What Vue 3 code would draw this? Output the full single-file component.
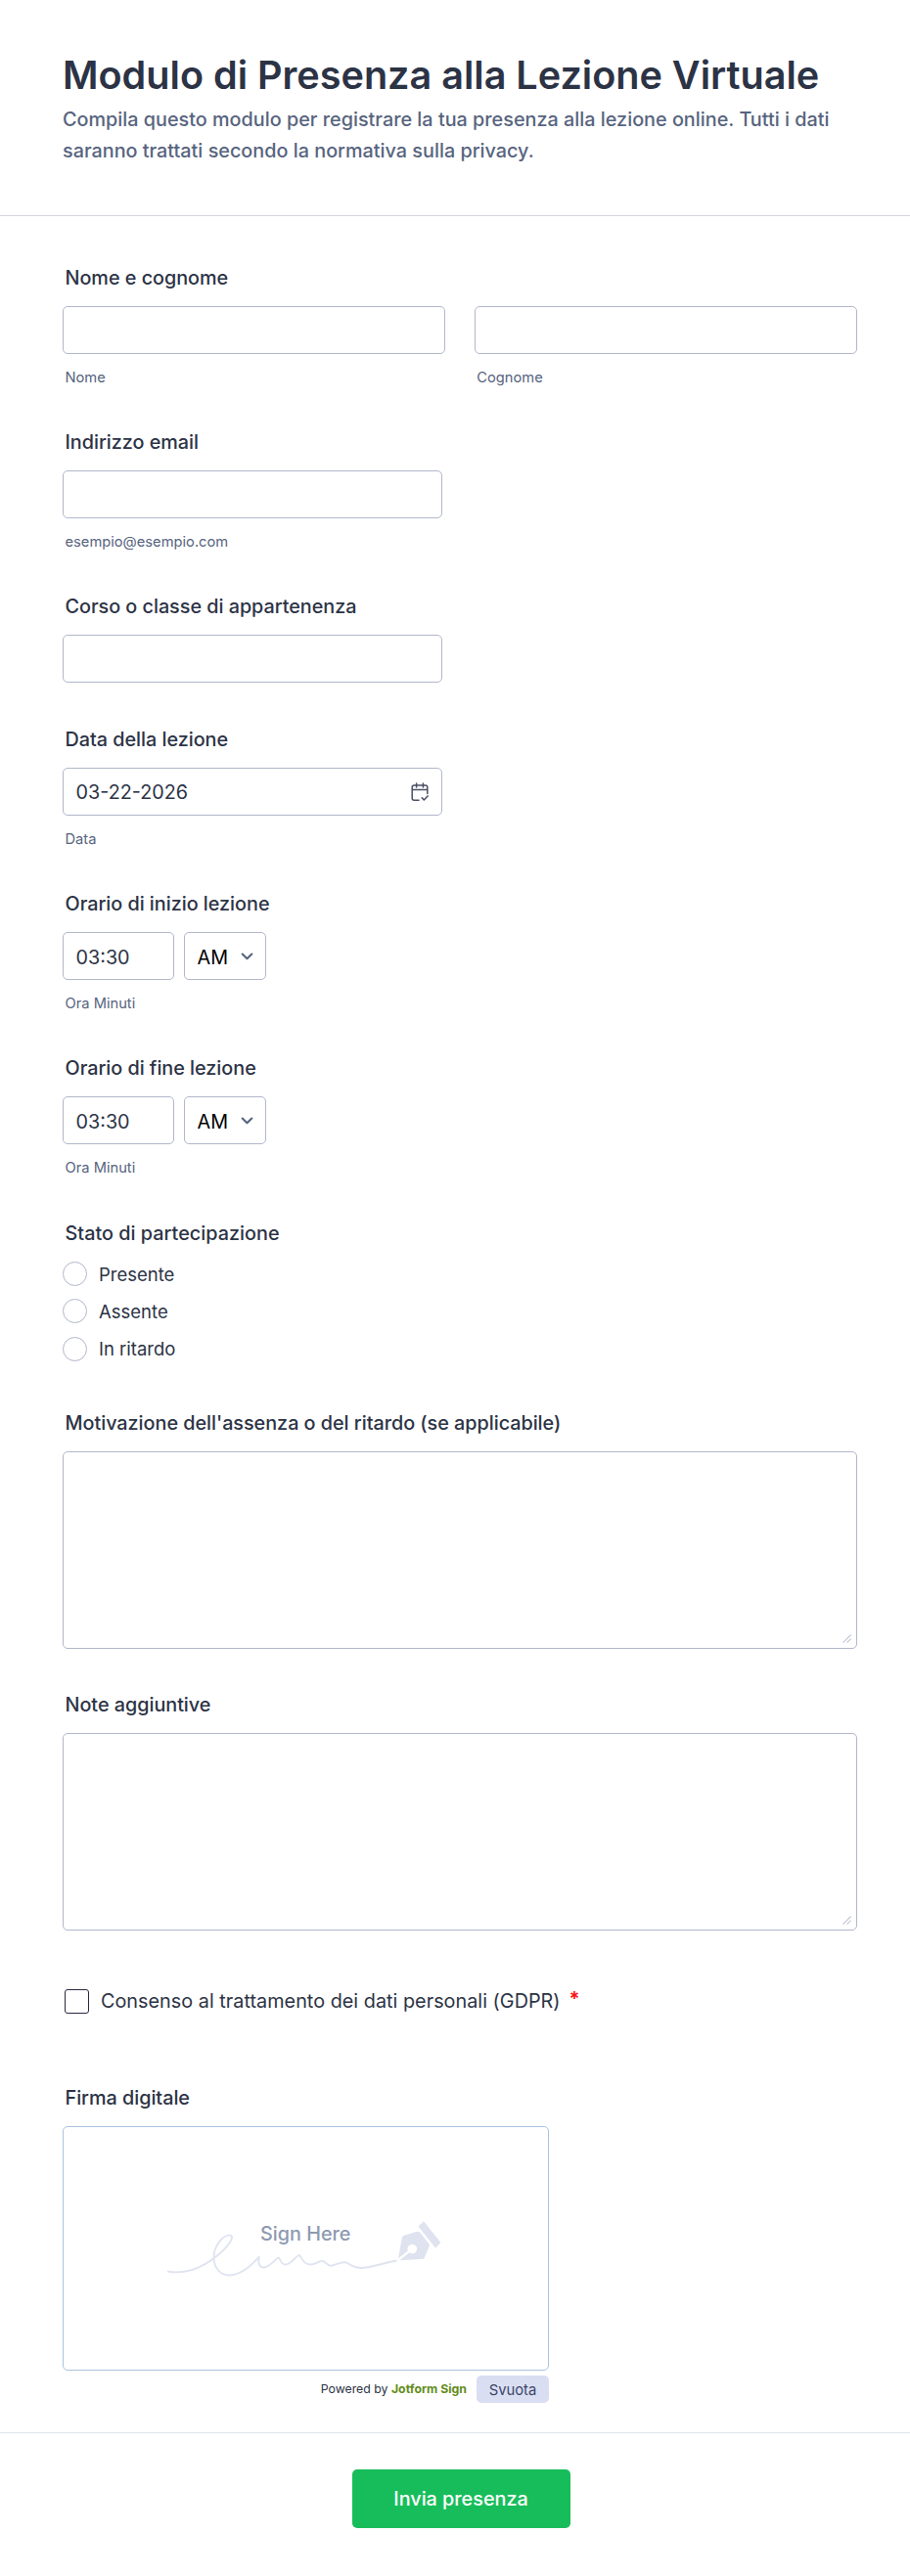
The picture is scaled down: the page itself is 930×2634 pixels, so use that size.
<script setup>
import { ref } from 'vue';

const firstName = ref('');
const lastName = ref('');
const email = ref('');
const course = ref('');
const lessonDate = ref('03-22-2026');
const status = ref('');
const consent = ref(false);

const times = ref([
  { id: 'start', label: 'Orario di inizio lezione', value: '03:30', period: 'AM' },
  { id: 'end', label: 'Orario di fine lezione', value: '03:30', period: 'AM' }
]);

const statuses = ['Presente', 'Assente', 'In ritardo'];

const notes = ref([
  { id: 'reason', label: "Motivazione dell'assenza o del ritardo (se applicabile)", value: '' },
  { id: 'notes', label: 'Note aggiuntive', value: '' }
]);
</script>

<template>
  <form class="form" @submit.prevent>
    <header class="form-header">
      <h1>Modulo di Presenza alla Lezione Virtuale</h1>
      <p>Compila questo modulo per registrare la tua presenza alla lezione online. Tutti i dati saranno trattati secondo la normativa sulla privacy.</p>
    </header>

    <div class="form-body">
      <div class="field">
        <label class="label" for="first">Nome e cognome</label>
        <div class="name-row">
          <div class="name-col">
            <input id="first" v-model="firstName" class="control" type="text">
            <span class="sub">Nome</span>
          </div>
          <div class="name-col">
            <input id="last" v-model="lastName" class="control" type="text">
            <span class="sub">Cognome</span>
          </div>
        </div>
      </div>

      <div class="field">
        <label class="label" for="email">Indirizzo email</label>
        <input id="email" v-model="email" class="control half" type="email">
        <span class="sub">esempio@esempio.com</span>
      </div>

      <div class="field no-sub">
        <label class="label" for="course">Corso o classe di appartenenza</label>
        <input id="course" v-model="course" class="control half" type="text">
      </div>

      <div class="field">
        <label class="label" for="date">Data della lezione</label>
        <div class="control half date-box">
          <input id="date" v-model="lessonDate" class="bare" type="text">
          <svg class="calendar" viewBox="0 0 18 20" fill="none" stroke="#4a4f63" stroke-width="1.5" stroke-linecap="round" stroke-linejoin="round">
            <path d="M8 18.2H3.2C2 18.2 1.2 17.4 1.2 16.2V5C1.2 3.8 2 3 3.2 3h11.6c1.2 0 2 .8 2 2v6.6M1.2 7.4h15.6M5.6 1v4M12.4 1v4" />
            <path d="M11.2 15.8l2.1 2.1 3.8-4" />
          </svg>
        </div>
        <span class="sub">Data</span>
      </div>

      <div v-for="time in times" :key="time.id" class="field">
        <label class="label" :for="time.id">{{ time.label }}</label>
        <div class="time-row">
          <input :id="time.id" v-model="time.value" class="control time" type="text">
          <div class="select-box">
            <select v-model="time.period" class="control">
              <option>AM</option>
              <option>PM</option>
            </select>
            <svg class="chevron" viewBox="0 0 12 8" fill="none" stroke="#57647e" stroke-width="2.1" stroke-linecap="round" stroke-linejoin="round">
              <path d="M1.2 1.5L6 6.2l4.8-4.7" />
            </svg>
          </div>
        </div>
        <span class="sub">Ora Minuti</span>
      </div>

      <div class="field status-field">
        <span class="label">Stato di partecipazione</span>
        <div class="radios">
          <label v-for="item in statuses" :key="item" class="radio">
            <input v-model="status" type="radio" name="status" :value="item">
            <span>{{ item }}</span>
          </label>
        </div>
      </div>

      <div v-for="note in notes" :key="note.id" class="field area-field">
        <label class="label" :for="note.id">{{ note.label }}</label>
        <div class="area-box">
          <textarea :id="note.id" v-model="note.value" class="control area"></textarea>
          <svg class="grip" viewBox="0 0 9 9" fill="none" stroke="#c0c5d6" stroke-width="1.1">
            <path d="M.5 8.6L8.6.5M4.6 8.6l4-4" />
          </svg>
        </div>
      </div>

      <label class="consent">
        <input v-model="consent" type="checkbox">
        <span class="consent-text">Consenso al trattamento dei dati personali (GDPR)</span>
        <span class="required">*</span>
      </label>

      <div class="signature-field">
        <span class="label">Firma digitale</span>
        <div class="pad">
          <svg class="sign" viewBox="0 0 280 60" fill="none">
            <path d="M0 52.5C24 57 42 44 54 34C66 23 68 16 64.5 15.7C56 15 47 28 47.5 39C48 51 56 57 64 56.5C77 56 88 44 94 37.500C92 45 95 49 99 48.5C106 47 109 41 113.5 38.5C116 38.5 115 46 121 45.5C127 45 130 38 134.500 36C138 37 138 46 147 45.5C153 45 156 41 159 42C163 43 163 48 169 46.5C175 45 179 42 183 43.5C188 46 190 49 198 49C209 49 219 44 234.5 41.5" stroke="#dfe4f0" stroke-width="1.9" />
            <path d="M242 15.7L255.3 11.8Q257.3 11.3 258.7 13.2L267.5 24.5Q268.4 25.7 267.6 27.2L262.2 39.8L237.5 41.3L247.3 33.3A4.8 4.8 0 1 0 245.9 31.5L236 39.3L239.800 18.3Q240.2 16.2 242 15.7Z" fill="#dfe3f0" />
            <path d="M262 1.8L279 23.3L274 28L257 6.5Z" fill="#dfe3f0" stroke="#dfe3f0" stroke-width="1" stroke-linejoin="round" />
            <text x="95" y="20.500">Sign Here</text>
          </svg>
        </div>
        <div class="pad-footer">
          <span class="powered">Powered by <b>Jotform Sign</b></span>
          <button class="clear" type="button">Svuota</button>
        </div>
      </div>
    </div>

    <footer class="form-footer">
      <button class="submit" type="submit">Invia presenza</button>
    </footer>
  </form>
</template>

<style>
body {
  background: #fff;
}
</style>

<style scoped>
.form {
  width: 100%;
  min-height: 2634px;
  background: #fff;
  color: #2c3345;
  font-family: Inter, "Liberation Sans", sans-serif;
  font-size: 19.8px;
}

.form * {
  box-sizing: border-box;
}

.form-header {
  height: 221px;
  padding: 52px 64px 0;
  border-bottom: 1px solid #d2d4de;
}

h1 {
  margin: 0;
  font-size: 39.6px;
  font-weight: 600;
  line-height: 50px;
  white-space: nowrap;
}

p {
  margin: 4px 0 0;
  color: #57647e;
  font-weight: 500;
  letter-spacing: 0.01px;
  line-height: 32px;
}

.form-body {
  padding: 51px 54.5px 0 64px;
}

.field {
  height: 168px;
}

.no-sub {
  height: 136px;
}

.label {
  display: block;
  height: 24px;
  margin-bottom: 17px;
  padding-left: 2.5px;
  font-weight: 500;
  letter-spacing: -0.02px;
  line-height: 24px;
}

.control {
  display: block;
  width: 100%;
  height: 49px;
  margin: 0;
  padding: 0 12.5px;
  border: 1px solid #b2b7ca;
  border-radius: 5px;
  outline: none;
  background: #fff;
  color: #2c3345;
  font: inherit;
  appearance: none;
}

.half {
  width: 388px;
}

.sub {
  display: block;
  margin-top: 14px;
  padding-left: 2.5px;
  color: #57647e;
  font-size: 14.7px;
  line-height: 20px;
}

.name-row {
  display: flex;
  gap: 30px;
}

.name-col {
  flex: 1;
}

.date-box {
  display: flex;
  align-items: center;
  justify-content: space-between;
}

.bare {
  width: 200px;
  padding: 0;
  border: none;
  outline: none;
  color: inherit;
  font: inherit;
}

.calendar {
  width: 18px;
  height: 20px;
  margin-right: 1px;
}

.time-row {
  display: flex;
  gap: 10.5px;
}

.time {
  width: 113.5px;
}

.time,
.select-box .control {
  padding-top: 2px;
}

.select-box {
  position: relative;
  width: 83.5px;
}

.select-box .control {
  color: #000;
}

.chevron {
  position: absolute;
  top: 21px;
  right: 13px;
  width: 13px;
  height: 8px;
  pointer-events: none;
}

.status-field {
  height: 194px;
  padding-top: 1px;
}

.status-field .label {
  letter-spacing: 0.03px;
}

.radios {
  display: flex;
  flex-direction: column;
  gap: 13.3px;
}

.radio {
  display: flex;
  align-items: center;
  gap: 12px;
  height: 25px;
  font-size: 18.5px;
  line-height: 25px;
}

.radio span {
  padding-top: 1px;
}

.radio input {
  width: 25px;
  height: 25px;
  margin: 0;
  border: 1px solid #b2b7ca;
  border-radius: 50%;
  appearance: none;
}

.radio input:checked {
  border: 7px solid #2e69ff;
}

.area-field {
  height: 288px;
  padding-top: 1px;
}

.area-box {
  position: relative;
}

.area {
  height: 201.5px;
  padding: 12px 13px;
  resize: none;
}

.grip {
  position: absolute;
  right: 6px;
  bottom: 6px;
  width: 9px;
  height: 9px;
}

.consent {
  display: flex;
  align-items: center;
  height: 25px;
  margin: 16px 0 74px 2px;
  line-height: 25px;
}

.consent-text {
  letter-spacing: 0.03px;
}

.consent input {
  width: 25px;
  height: 25px;
  margin: 0 12px 0 0;
  border: 1.5px solid #2c2840;
  border-radius: 3px;
  appearance: none;
}

.consent input:checked {
  background: #2e69ff;
}

.required {
  margin-left: 9px;
  padding-bottom: 4px;
  color: #f91515;
  font-weight: 700;
}

.pad {
  display: flex;
  justify-content: center;
  width: 497px;
  height: 250px;
  padding: 95px 3px 0 0;
  border: 1px solid #abc3df;
  border-radius: 5px;
}

.sign {
  width: 280px;
  height: 60px;
}

.sign text {
  fill: #8d9ab0;
  font-size: 19.8px;
  font-weight: 500;
}

.pad-footer {
  display: flex;
  justify-content: flex-end;
  gap: 10px;
  width: 497px;
  margin-top: 5px;
}

.powered {
  font-size: 12.3px;
  line-height: 28px;
}

.powered b {
  color: #648c1c;
}

.clear {
  width: 74px;
  height: 28px;
  padding: 2px 0 0;
  border: none;
  border-radius: 5px;
  background: #dadef3;
  color: #3a4667;
  font-family: inherit;
  font-size: 14.8px;
}

.form-footer {
  display: flex;
  justify-content: center;
  margin-top: 30px;
  padding: 37px 0 49px 12px;
  border-top: 1px solid #dfe4ee;
}

.submit {
  width: 223px;
  height: 60px;
  padding: 0;
  border: none;
  border-radius: 5px;
  background: #18bd5b;
  color: #fff;
  font-family: inherit;
  font-size: 19.8px;
  font-weight: 500;
}
</style>
